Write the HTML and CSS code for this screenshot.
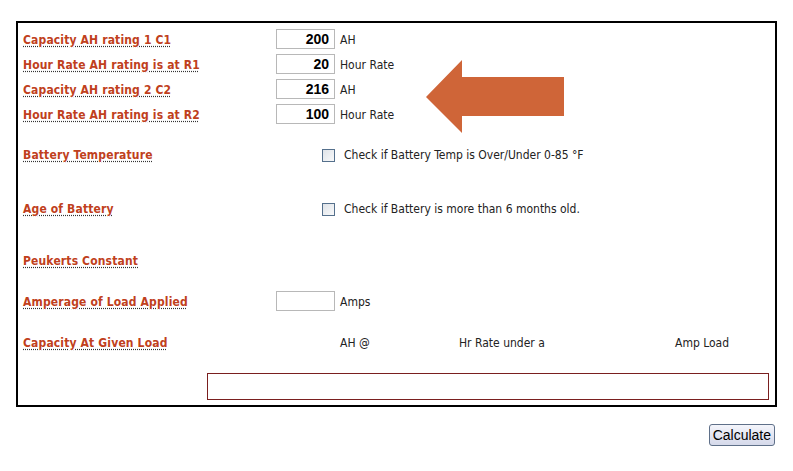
FILE: index.html
```html
<!DOCTYPE html>
<html lang="en">
<head>
<meta charset="UTF-8">
<meta name="viewport" content="width=device-width, initial-scale=1.0">
<title>Battery Capacity Calculator</title>
<link rel="stylesheet" href="styles.css">
</head>
<body>
    <div class="page">
        <form class="calc-box" id="peukertForm" onsubmit="return false">
            <!-- Rated capacities -->
            <div class="row">
                <a class="field-label" href="#">Capacity AH rating 1 C1</a>
                <input class="num" type="text" value="200">
                <span class="unit">AH</span>
            </div>
            <div class="row">
                <a class="field-label" href="#">Hour Rate AH rating is at R1</a>
                <input class="num" type="text" value="20">
                <span class="unit">Hour Rate</span>
            </div>
            <div class="row">
                <a class="field-label" href="#">Capacity AH rating 2 C2</a>
                <input class="num" type="text" value="216">
                <span class="unit">AH</span>
            </div>
            <div class="row">
                <a class="field-label" href="#">Hour Rate AH rating is at R2</a>
                <input class="num" type="text" value="100">
                <span class="unit">Hour Rate</span>
            </div>

            <!-- Corrections -->
            <div class="row row-temp">
                <a class="field-label" href="#">Battery Temperature</a>
                <label class="check"><span class="box"></span>Check if Battery Temp is Over/Under 0-85 °F</label>
            </div>
            <div class="row row-tall">
                <a class="field-label" href="#">Age of Battery</a>
                <label class="check"><span class="box"></span>Check if Battery is more than 6 months old.</label>
            </div>
            <div class="row row-tall">
                <a class="field-label" href="#">Peukerts Constant</a>
            </div>
            <div class="row row-amps">
                <a class="field-label" href="#">Amperage of Load Applied</a>
                <input class="num" type="text" value="">
                <span class="unit">Amps</span>
            </div>
            <div class="row row-tall">
                <a class="field-label" href="#">Capacity At Given Load</a>
                <span class="result-text at">AH @</span>
                <span class="result-text rate">Hr Rate under a</span>
                <span class="result-text load">Amp Load</span>
            </div>

            <div class="output"></div>
        </form>

        <div class="actions">
            <button type="button">Calculate</button>
        </div>

        <!-- pointer arrow drawn over the form -->
        <svg class="arrow" width="140" height="76" viewBox="0 0 140 76">
            <polygon points="0,37 36,0 36,17 138,17 138,56 36,56 36,73" fill="#cf6538"/>
        </svg>
    </div>
</body>
</html>
```

FILE: styles.css
```css
body {
margin: 0;
padding: 0;
background: #ffffff;
font-family: Tahoma, "DejaVu Sans", sans-serif;
}

.page {
position: relative;
padding: 21px 16px 0;
width: 761px;
}

.calc-box {
border: 2px solid #000000;
padding: 3px 0 5px 5px;
}

.row {
display: flex;
align-items: center;
height: 25px;
}

.row-temp {
height: 56px;
}

.row-tall {
height: 52px;
}

.row-amps {
height: 30px;
}

.field-label {
width: 253px;
flex-shrink: 0;
padding-top: 2px;
color: #c0401c;
font-family: "DejaVu Sans Condensed", "DejaVu Sans", sans-serif;
font-weight: bold;
font-size: 12px;
letter-spacing: 0.15px;
text-decoration: underline dotted #333333;
text-underline-offset: 2px;
}

.num {
box-sizing: border-box;
width: 59px;
height: 20px;
border: 1px solid #b8b8b8;
padding: 0 5px;
text-align: right;
font-family: "Liberation Sans", Arial, sans-serif;
font-weight: bold;
font-size: 14px;
color: #000000;
}

.unit,
.check,
.result-text {
padding-top: 2px;
font-family: "DejaVu Sans Condensed", "DejaVu Sans", sans-serif;
font-size: 12px;
color: #222222;
}

.unit {
margin-left: 5px;
}

.check {
display: flex;
align-items: center;
margin-left: 46px;
}

.box {
display: inline-block;
width: 11px;
height: 11px;
border: 1px solid #55708c;
background: linear-gradient(135deg, #dfe3e8, #f8f9fa);
margin-right: 9px;
}

.result-text.at {
margin-left: 64px;
width: 119px;
}

.result-text.rate {
width: 216px;
}

.output {
margin: 5px 6px 0 184px;
height: 25px;
border: 1px solid #7a1f1f;
}

.actions {
display: flex;
justify-content: flex-end;
padding: 17px 2px 0 0;
}

button {
height: 22px;
padding: 0 3px;
border: 1px solid #5f7089;
border-radius: 3px;
background: linear-gradient(#f4f5fb, #d5d9ea);
font-family: "Liberation Sans", Arial, sans-serif;
font-size: 14px;
color: #000000;
}

.arrow {
position: absolute;
left: 426px;
top: 60px;
}
```
